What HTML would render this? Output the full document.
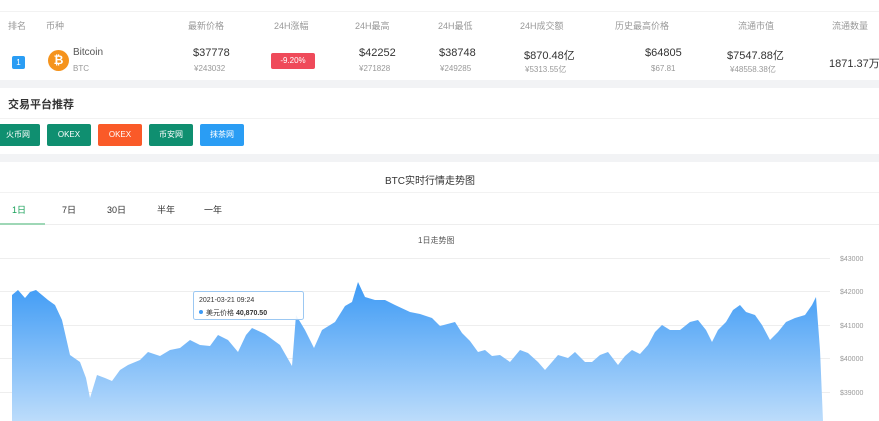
<!DOCTYPE html>
<html><head><meta charset="utf-8"><style>
*{margin:0;padding:0;box-sizing:border-box}
body{width:879px;height:421px;overflow:hidden;background:#fff;font-family:"Liberation Sans","Noto Sans CJK SC",sans-serif;color:#333;position:relative}
.a{position:absolute;white-space:nowrap}
.h{font-size:9px;color:#999;top:19px}
.v{font-size:11px;color:#333}
.s{font-size:8px;color:#999}
.btn{position:absolute;top:124px;height:22px;width:44px;color:#fff;font-size:8px;text-align:center;line-height:22px;border-radius:2px}
</style></head><body>
<div class="a" style="left:0;top:0;width:879px;height:12px;border-bottom:1px solid #f2f2f2"></div>
<div class="a h" style="left:8px">排名</div>
<div class="a h" style="left:46px">币种</div>
<div class="a h" style="left:188px">最新价格</div>
<div class="a h" style="left:274px">24H涨幅</div>
<div class="a h" style="left:355px">24H最高</div>
<div class="a h" style="left:438px">24H最低</div>
<div class="a h" style="left:520px">24H成交额</div>
<div class="a h" style="left:615px">历史最高价格</div>
<div class="a h" style="left:738px">流通市值</div>
<div class="a h" style="left:832px">流通数量</div>
<div class="a" style="left:12px;top:56px;width:13px;height:13px;background:#2a9df4;color:#fff;font-size:8px;text-align:center;line-height:13px;border-radius:2px">1</div>
<div class="a" style="left:48px;top:50px;width:21px;height:21px;border-radius:50%;background:#f5931c;color:#fff;font-size:12px;font-weight:bold;text-align:center;line-height:21px">₿</div>
<div class="a" style="left:73px;top:47px;font-size:10px;color:#555">Bitcoin</div>
<div class="a s" style="left:73px;top:64px">BTC</div>
<div class="a v" style="left:193px;top:47px">$37778</div><div class="a s" style="left:194px;top:64px">¥243032</div>
<div class="a" style="left:271px;top:53px;width:44px;height:16px;background:#ef4a5a;color:#fff;font-size:8px;text-align:center;line-height:16px;border-radius:2px">-9.20%</div>
<div class="a v" style="left:359px;top:47px">$42252</div><div class="a s" style="left:359px;top:64px">¥271828</div>
<div class="a v" style="left:439px;top:47px">$38748</div><div class="a s" style="left:440px;top:64px">¥249285</div>
<div class="a v" style="left:524px;top:47px">$870.48亿</div><div class="a s" style="left:525px;top:64px">¥5313.55亿</div>
<div class="a v" style="left:645px;top:47px">$64805</div><div class="a s" style="left:651px;top:64px">$67.81</div>
<div class="a v" style="left:727px;top:47px">$7547.88亿</div><div class="a s" style="left:730px;top:64px">¥48558.38亿</div>
<div class="a v" style="left:829px;top:55px">1871.37万</div>
<div class="a" style="left:0;top:80px;width:879px;height:8px;background:#f2f3f5"></div>
<div class="a" style="left:8px;top:96px;font-size:11px;font-weight:bold;color:#333">交易平台推荐</div>
<div class="a" style="left:0;top:118px;width:879px;height:1px;background:#f2f2f2"></div>
<div class="btn" style="left:-4px;background:#0f8f70">火币网</div>
<div class="btn" style="left:47px;background:#0f8f70">OKEX</div>
<div class="btn" style="left:98px;background:#fa5a28">OKEX</div>
<div class="btn" style="left:149px;background:#0f8f70">币安网</div>
<div class="btn" style="left:200px;background:#2a9df4">抹茶网</div>
<div class="a" style="left:0;top:154px;width:879px;height:8px;background:#f2f3f5"></div>
<div class="a" style="left:385px;top:172px;font-size:10px;color:#333">BTC实时行情走势图</div>
<div class="a" style="left:0;top:192px;width:879px;height:1px;background:#f2f2f2"></div>
<div class="a" style="left:12px;top:203px;font-size:9px;color:#18a058">1日</div>
<div class="a" style="left:62px;top:203px;font-size:9px;color:#333">7日</div>
<div class="a" style="left:107px;top:203px;font-size:9px;color:#333">30日</div>
<div class="a" style="left:157px;top:203px;font-size:9px;color:#333">半年</div>
<div class="a" style="left:204px;top:203px;font-size:9px;color:#333">一年</div>
<div class="a" style="left:0;top:224px;width:879px;height:1px;background:#eee"></div>
<div class="a" style="left:0;top:223px;width:45px;height:2px;background:#9ed7b6"></div>
<div class="a" style="left:418px;top:235px;font-size:8px;color:#555">1日走势图</div>
<svg class="a" style="left:0;top:0" width="879" height="421">
<defs><linearGradient id="g" x1="0" y1="0" x2="0" y2="1"><stop offset="0" stop-color="#3d9af5"/><stop offset="1" stop-color="#bcdcfb"/></linearGradient></defs>
<g stroke="#eee" stroke-width="1">
<line x1="0" y1="258.5" x2="830" y2="258.5"/><line x1="0" y1="291.5" x2="830" y2="291.5"/><line x1="0" y1="325.5" x2="830" y2="325.5"/><line x1="0" y1="358.5" x2="830" y2="358.5"/><line x1="0" y1="392.5" x2="830" y2="392.5"/></g>
<path fill="url(#g)" d="M12 421 L12 295 L18 290 L25 298 L30 292 L36 290 L42 295 L48 300 L55 305 L62 320 L70 355 L80 362 L86 378 L90 398 L97 375 L105 378 L112 381 L120 370 L128 365 L140 360 L148 352 L160 356 L170 350 L180 348 L190 340 L200 345 L210 346 L218 335 L228 340 L238 352 L246 335 L252 328 L265 334 L280 345 L292 366 L296 315 L305 330 L314 348 L322 330 L335 322 L345 306 L352 302 L358 282 L365 297 L375 300 L385 300 L395 305 L410 312 L420 314 L432 318 L440 326 L455 322 L462 333 L470 341 L478 352 L485 350 L492 356 L500 355 L510 362 L520 350 L528 353 L538 362 L545 370 L552 362 L558 355 L568 358 L575 352 L585 362 L592 362 L600 355 L608 352 L618 365 L625 356 L632 350 L640 354 L648 345 L655 332 L662 325 L670 330 L680 330 L690 322 L698 320 L706 330 L712 342 L718 330 L726 322 L733 310 L740 305 L746 312 L755 315 L762 325 L770 340 L778 332 L786 322 L795 318 L805 315 L812 305 L816 297 L820 350 L823 421 Z"/>
<rect x="193.5" y="291.5" width="110" height="28" fill="#fff" fill-opacity=".9" stroke="#9cc8f2" rx="2"/>
<text x="199" y="302" font-size="7" fill="#333" font-family="Liberation Sans">2021-03-21 09:24</text>
<circle cx="201" cy="312" r="2" fill="#3d9af5"/>
<text x="206" y="315" font-size="7" fill="#333" font-family="Liberation Sans,Noto Sans CJK SC">美元价格 <tspan font-weight="bold">40,870.50</tspan></text>
<g font-size="7" fill="#999" font-family="Liberation Sans"><text x="840" y="261">$43000</text><text x="840" y="294">$42000</text><text x="840" y="328">$41000</text><text x="840" y="361">$40000</text><text x="840" y="395">$39000</text></g>
</svg>
</body></html>
